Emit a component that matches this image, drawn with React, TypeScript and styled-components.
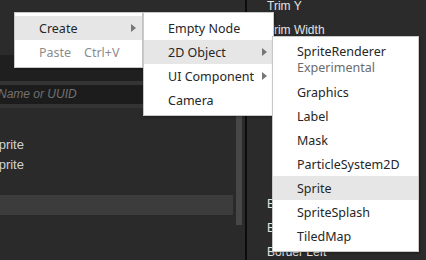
import React from "react";
import styled, { createGlobalStyle } from "styled-components";

type Item = {
  label: string;
  sub?: string;
  shortcut?: string;
  arrow?: boolean;
  active?: boolean;
  disabled?: boolean;
};

const mainItems: Item[] = [
  { label: "Create", arrow: true, active: true },
  { label: "Paste", shortcut: "Ctrl+V", disabled: true },
];

const createItems: Item[] = [
  { label: "Empty Node" },
  { label: "2D Object", arrow: true, active: true },
  { label: "UI Component", arrow: true },
  { label: "Camera" },
];

const objectItems: Item[] = [
  { label: "SpriteRenderer", sub: "Experimental" },
  { label: "Graphics" },
  { label: "Label" },
  { label: "Mask" },
  { label: "ParticleSystem2D" },
  { label: "Sprite", active: true },
  { label: "SpriteSplash" },
  { label: "TiledMap" },
];

const treeRows = [
  { name: "" },
  { name: "Sprite" },
  { name: "Sprite" },
  { name: "" },
  { name: "", selected: true },
];

const MenuList = ({ items, left, top, width }: { items: Item[]; left: number; top: number; width: number }) => (
  <Menu $left={left} $top={top} $width={width}>
    {items.map((it, i) => (
      <MenuItem key={i} $active={it.active} $disabled={it.disabled} $tall={!!it.sub}>
        <LabelBox>
          <Label>{it.label}</Label>
          {it.sub && <Sub>{it.sub}</Sub>}
        </LabelBox>
        {it.shortcut && <Shortcut>{it.shortcut}</Shortcut>}
        {it.arrow && <Arrow />}
      </MenuItem>
    ))}
  </Menu>
);

const App = () => {
  return (
    <Page>
      <GlobalStyle />
      <LeftPanel>
        <Header />
        <Toolbar />
        <Rule />
        <Search>Name or UUID</Search>
        <Rule />
        <Tree>
          <Rows>
            {treeRows.map((r, i) => (
              <TreeRow key={i} $selected={r.selected}>
                {r.name}
              </TreeRow>
            ))}
          </Rows>
          <Scrollbar />
        </Tree>
      </LeftPanel>
      <Divider />
      <RightPanel>
        <PropRow>Trim Y</PropRow>
        <PropRow>Trim Width</PropRow>
        <PropRow>Trim Height</PropRow>
        <BorderGroup>
          <PropRow>Border Top</PropRow>
          <PropRow>Border Bottom</PropRow>
          <PropRow>Border Left</PropRow>
        </BorderGroup>
      </RightPanel>

      <MenuList items={mainItems} left={14} top={12} width={129} />
      <MenuList items={createItems} left={143} top={12} width={131} />
      <MenuList items={objectItems} left={272} top={36} width={147} />
    </Page>
  );
};

export default App;

const GlobalStyle = createGlobalStyle`
  body {
    margin: 0;
    background: #2b2b2b;
    overflow: hidden;
  }
`;
const Page = styled.div`
  position: relative;
  display: flex;
  width: 426px;
  height: 260px;
  overflow: hidden;
  background: #2b2b2b;
  font-family: "Liberation Sans", Arial, sans-serif;
`;
const LeftPanel = styled.div`
  width: 245px;
  display: flex;
  flex-direction: column;
  overflow: hidden;
`;
const Header = styled.div`
  height: 55px;
  background: #2b2b2b;
`;
const Toolbar = styled.div`
  height: 26px;
  background: #1f1f1f;
`;
const Rule = styled.div`
  height: 4px;
  background: #343434;
`;
const Search = styled.div`
  height: 19px;
  line-height: 19px;
  background: #1c1c1c;
  color: #727272;
  font-size: 12px;
  font-style: italic;
  text-indent: -2px;
  white-space: nowrap;
`;
const Tree = styled.div`
  flex: 1;
  display: grid;
  grid-template-columns: 233px 6px;
  column-gap: 3px;
  background: #2a2a2a;
`;
const Rows = styled.div`
  padding-top: 7px;
  display: flex;
  flex-direction: column;
  overflow: hidden;
`;
const TreeRow = styled.div<{ $selected?: boolean }>`
  height: 20px;
  line-height: 20px;
  text-indent: -10px;
  font-size: 13px;
  color: #d2d2d2;
  background: ${(p) => (p.$selected ? "#3c3c3c" : "transparent")};
  white-space: nowrap;
`;
const Scrollbar = styled.div`
  margin-top: 4px;
  height: 113px;
  background: #474747;
`;
const Divider = styled.div`
  width: 2px;
  background: #0c0c0c;
`;
const RightPanel = styled.div`
  flex: 1;
  display: flex;
  flex-direction: column;
  margin-top: -6px;
  padding-left: 20px;
`;
const PropRow = styled.div`
  height: 24px;
  line-height: 24px;
  font-size: 12px;
  color: #e2e2e2;
  white-space: nowrap;
`;
const BorderGroup = styled.div`
  margin-top: 126px;
`;
const Menu = styled.div<{ $left: number; $top: number; $width: number }>`
  position: absolute;
  left: ${(p) => p.$left}px;
  top: ${(p) => p.$top}px;
  width: ${(p) => p.$width}px;
  box-sizing: border-box;
  padding: 3px 0;
  background: #fff;
  border: 1px solid #c9c9c9;
  box-shadow: 1px 1px 2px rgba(0, 0, 0, 0.35);
  font-family: "Noto Sans", "Liberation Sans", sans-serif;
  font-size: 12.5px;
`;
const MenuItem = styled.div<{ $active?: boolean; $disabled?: boolean; $tall?: boolean }>`
  display: flex;
  align-items: ${(p) => (p.$tall ? "flex-start" : "center")};
  height: ${(p) => (p.$tall ? 40 : 24)}px;
  padding: ${(p) => (p.$tall ? "4px 6px 0 24px" : "1px 6px 0 24px")};
  box-sizing: border-box;
  background: ${(p) => (p.$active ? "#e6e6e6" : "transparent")};
  color: ${(p) => (p.$disabled ? "#8c8c8c" : "#262626")};
`;
const LabelBox = styled.div`
  display: flex;
  flex-direction: column;
  min-width: 45px;
`;
const Label = styled.span`
  line-height: 16px;
  white-space: nowrap;
`;
const Sub = styled.span`
  line-height: 16px;
  color: #6a6a6a;
  white-space: nowrap;
`;
const Shortcut = styled.span`
  line-height: 16px;
  white-space: nowrap;
`;
const Arrow = styled.span`
  margin-left: auto;
  margin-top: -1px;
  width: 0;
  height: 0;
  border-top: 4px solid transparent;
  border-bottom: 4px solid transparent;
  border-left: 5px solid #777;
`;
